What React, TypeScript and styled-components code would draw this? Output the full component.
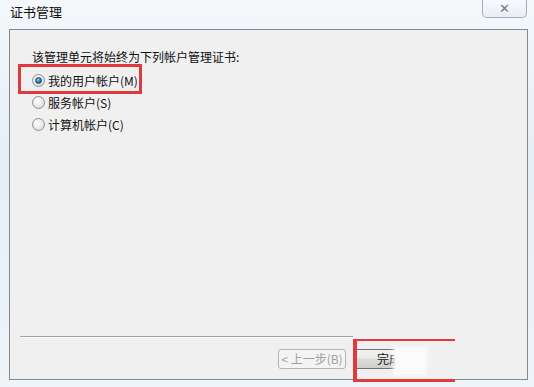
import { createGlobalStyle } from "styled-components";
import styled from "styled-components";

const GlobalStyle = createGlobalStyle`
  html, body {
    margin: 0;
    padding: 0;
    background: #eef4f9;
  }
  body {
    font-family: "Noto Sans CJK SC", "Liberation Sans", sans-serif;
  }
`;

const Window = styled.div`
  position: relative;
  width: 534px;
  height: 387px;
  overflow: hidden;
  background: linear-gradient(180deg, #f4f8fb 0%, #e6eef5 40%, #eef4f8 100%);
  display: flex;
  flex-direction: column;
`;

const TitleBar = styled.div`
  height: 29px;
  display: flex;
  justify-content: space-between;
  align-items: flex-start;
  padding-left: 10px;
  padding-right: 7px;
  box-sizing: border-box;
`;

const Title = styled.span`
  margin-top: 4px;
  font-size: 13px;
  line-height: 16px;
  color: #111;
`;

const CloseButton = styled.div`
  width: 45px;
  height: 18px;
  box-sizing: border-box;
  border: 1px solid #9fb0c2;
  border-top: none;
  border-radius: 0 0 5px 5px;
  background: linear-gradient(180deg, #f8fafc 0%, #e9eef3 100%);
  display: flex;
  align-items: center;
  justify-content: center;
  color: #6d7784;
  font-size: 13px;
  font-weight: bold;
  font-family: "DejaVu Sans", sans-serif;
`;

const Panel = styled.div`
  position: relative;
  margin-left: 9px;
  width: 519px;
  height: 351px;
  box-sizing: border-box;
  border: 1px solid #7f8a96;
  background: #f0f0f0;
  display: flex;
  flex-direction: column;
  padding: 19px 0 0 22px;
`;

const Heading = styled.div`
  font-size: 12px;
  line-height: 16px;
  color: #111;
`;

const RadioList = styled.div`
  margin-top: 7px;
  display: flex;
  flex-direction: column;
  gap: 5px;
`;

const RadioRow = styled.div<{ $highlight?: boolean }>`
  position: relative;
  display: flex;
  align-items: center;
  gap: 2px;
  height: 17px;
  font-size: 12px;
  color: #111;

  &::after {
    content: "";
    display: ${(p) => (p.$highlight ? "block" : "none")};
    position: absolute;
    left: -14px;
    top: -8px;
    width: 124px;
    height: 30px;
    box-sizing: border-box;
    border: 3px solid #e03a3e;
  }
`;

const RadioDot = styled.span<{ $checked?: boolean }>`
  width: 11px;
  height: 11px;
  border-radius: 50%;
  border: 1px solid #8e8f8f;
  background: radial-gradient(circle at 40% 35%, #ffffff 0%, #e6e6e6 60%, #cfd3d6 100%);
  display: flex;
  align-items: center;
  justify-content: center;
  flex-shrink: 0;

  &::before {
    content: "";
    display: ${(p) => (p.$checked ? "block" : "none")};
    width: 5px;
    height: 5px;
    border-radius: 50%;
    background: radial-gradient(circle at 40% 35%, #8fd1f5 0%, #1a6fa8 60%, #0d3f66 100%);
    border: 0.5px solid #1e4d73;
  }
`;

const Label = styled.span`
  line-height: 17px;
  margin-left: 1px;
`;

const Spacer = styled.div`
  flex: 1;
`;

const Separator = styled.div`
  width: 333px;
  margin-left: -12px;
  height: 0;
  border-top: 1px solid #a0a0a0;
  border-bottom: 1px solid #ffffff;
`;

const ButtonRow = styled.div`
  display: flex;
  gap: 7px;
  margin-left: 246px;
  margin-top: 11px;
  margin-bottom: 10px;
`;

const Button = styled.div<{ $disabled?: boolean; $width: number }>`
  width: ${(p) => p.$width}px;
  height: 20px;
  box-sizing: border-box;
  border: 1px solid ${(p) => (p.$disabled ? "#b5b2b2" : "#707070")};
  border-radius: 3px;
  background: ${(p) =>
    p.$disabled
      ? "#f4f4f4"
      : "linear-gradient(180deg, #f2f2f2 0%, #ebebeb 45%, #dddddd 50%, #cfcfcf 100%)"};
  color: ${(p) => (p.$disabled ? "#a0a0a0" : "#111")};
  font-size: 12px;
  line-height: 18px;
  text-align: center;
  white-space: nowrap;
  overflow: hidden;
`;

const FinishText = styled.span`
  display: inline-block;
  padding-left: 14px;
`;

const Eraser = styled.div`
  position: absolute;
  left: 385px;
  top: 319px;
  width: 30px;
  height: 25px;
  background: #fbfbfb;
  box-shadow: 0 0 4px 2px #fbfbfb;
`;

const Annotation = styled.div`
  position: absolute;
  left: 343px;
  top: 309px;
  width: 102px;
  height: 43px;
  box-sizing: border-box;
  border-left: 4px solid #e03a3e;
  border-top: 2px solid #e03a3e;
  border-bottom: 3px solid #e03a3e;
`;

export default function App() {
  return (
    <>
      <GlobalStyle />
      <Window>
        <TitleBar>
          <Title>证书管理</Title>
          <CloseButton>✕</CloseButton>
        </TitleBar>
        <Panel>
          <Heading>该管理单元将始终为下列帐户管理证书:</Heading>
          <RadioList>
            <RadioRow $highlight>
              <RadioDot $checked />
              <Label>我的用户帐户(M)</Label>
            </RadioRow>
            <RadioRow>
              <RadioDot />
              <Label>服务帐户(S)</Label>
            </RadioRow>
            <RadioRow>
              <RadioDot />
              <Label>计算机帐户(C)</Label>
            </RadioRow>
          </RadioList>
          <Spacer />
          <Separator />
          <ButtonRow>
            <Button $disabled $width={68}>
              &lt; 上一步(B)
            </Button>
            <Button $width={58}>
              <FinishText>完成</FinishText>
            </Button>
          </ButtonRow>
          <Eraser />
          <Annotation />
        </Panel>
      </Window>
    </>
  );
}
